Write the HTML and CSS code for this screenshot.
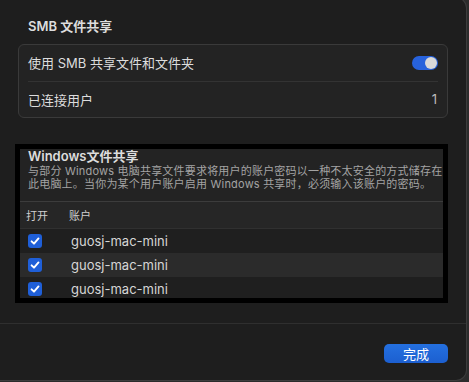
FILE: index.html
```html
<!DOCTYPE html>
<html lang="zh-CN">
<head>
    <meta charset="UTF-8">
    <meta name="viewport" content="width=device-width, initial-scale=1.0">
    <title>SMB 文件共享</title>
    <link rel="stylesheet" href="styles.css">
</head>
<body>

    <div class="window">
        <h2 class="section-title">SMB 文件共享</h2>

        <div class="card">
            <div class="card-row">
                <span>使用 SMB 共享文件和文件夹</span>
                <span class="toggle"><span class="knob"></span></span>
            </div>
            <div class="card-row">
                <span>已连接用户</span>
                <span class="value">1</span>
            </div>
        </div>

        <div class="win-box">
            <div class="win-inner">
                <div class="win-head">
                    <h3>Windows文件共享</h3>
                    <p>与部分 Windows 电脑共享文件要求将用户的账户密码以一种不太安全的方式储存在<br>此电脑上。当你为某个用户账户启用 Windows 共享时，必须输入该账户的密码。</p>
                </div>
                <div class="table-head">
                    <span class="col-on">打开</span>
                    <span>账户</span>
                </div>
                <div class="table-row">
                    <span class="check">
                        <svg viewBox="0 0 14 14" width="14" height="14"><path d="M3.6 7.3 L6 9.7 L10.5 4.4" fill="none" stroke="#fff" stroke-width="1.9" stroke-linecap="round" stroke-linejoin="round"/></svg>
                    </span>
                    <span class="name">guosj-mac-mini</span>
                </div>
                <div class="table-row alt">
                    <span class="check">
                        <svg viewBox="0 0 14 14" width="14" height="14"><path d="M3.6 7.3 L6 9.7 L10.5 4.4" fill="none" stroke="#fff" stroke-width="1.9" stroke-linecap="round" stroke-linejoin="round"/></svg>
                    </span>
                    <span class="name">guosj-mac-mini</span>
                </div>
                <div class="table-row">
                    <span class="check">
                        <svg viewBox="0 0 14 14" width="14" height="14"><path d="M3.6 7.3 L6 9.7 L10.5 4.4" fill="none" stroke="#fff" stroke-width="1.9" stroke-linecap="round" stroke-linejoin="round"/></svg>
                    </span>
                    <span class="name">guosj-mac-mini</span>
                </div>
            </div>
        </div>

        <div class="footer">
            <button class="done-btn">完成</button>
        </div>
    </div>

</body>
</html>
```

FILE: styles.css
```css
* {
    margin: 0;
    padding: 0;
    box-sizing: border-box;
    font-family: "Inter", "Noto Sans CJK SC", sans-serif;
}
body {
    background: #2c2c2c;
    color: #dddddd;
    overflow: hidden;
}
.window {
    width: 467px;
    height: 384px;
    margin-top: -3px;
    background: #1e1e1e;
    border: 1px solid #3d3d3d;
    border-left: none;
    border-radius: 0 11px 11px 0;
    display: flex;
    flex-direction: column;
    overflow: hidden;
}
.section-title {
    font-size: 13px;
    font-weight: 600;
    line-height: 16px;
    margin: 20px 0 0 28px;
}
.card {
    margin: 10px 18px 0 18px;
    height: 74px;
    background: #232323;
    border: 1px solid #3a3a3a;
    border-radius: 6px;
    padding: 0 9px;
    display: flex;
    flex-direction: column;
}
.card-row {
    flex: 1;
    display: flex;
    align-items: center;
    justify-content: space-between;
    font-size: 13px;
}
.card-row + .card-row {
    border-top: 1px solid #333;
}
.value {
    color: #bdbdbd;
    padding-right: 1px;
}
.toggle {
    width: 26px;
    height: 14px;
    border-radius: 7px;
    background: #2762dc;
    display: flex;
    align-items: center;
    justify-content: flex-end;
    padding: 1px;
}
.knob {
    width: 12px;
    height: 12px;
    border-radius: 50%;
    background: #d9d9d9;
}
.win-box {
    margin: 26px 18px 0 15px;
    height: 159px;
    border: 5px solid #000;
    background: #000;
}
.win-inner {
    height: 100%;
    background: #232323;
    overflow: hidden;
}
.win-head {
    padding: 0 0 10px 9px;
    border-bottom: 1px solid #3c3c3c;
}
.win-head h3 {
    font-size: 13px;
    font-weight: 600;
    line-height: 15px;
    margin-left: -1px;
}
.win-head p {
    font-size: 11px;
    line-height: 13px;
    letter-spacing: 0.2px;
    color: #a3a3a3;
    margin-top: 1px;
    margin-left: -1px;
}
.table-head {
    height: 27px;
    display: flex;
    align-items: center;
    padding-left: 6px;
    font-size: 11px;
    color: #cfcfcf;
    background: #262626;
    border-bottom: 1px solid #303030;
}
.col-on {
    width: 43px;
}
.table-row {
    height: 24px;
    display: flex;
    align-items: center;
    padding-left: 8px;
    background: #1f1f1f;
}
.table-row.alt {
    background: #2b2b2b;
}
.check {
    width: 14px;
    height: 14px;
    border-radius: 3px;
    background: #1f5fd8;
    display: flex;
}
.name {
    margin-left: 29px;
    font-size: 13px;
    color: #d6d6d6;
}
.footer {
    margin-top: 20px;
    border-top: 1px solid #2f2f2f;
    flex: 1;
    display: flex;
    justify-content: flex-end;
    align-items: flex-start;
    padding: 20px 18px 0 0;
}
.done-btn {
    width: 64px;
    height: 19px;
    border: none;
    border-radius: 5px;
    background: linear-gradient(#2470e0, #1c5fd0);
    color: #fff;
    font-size: 13px;
    cursor: pointer;
}
```
